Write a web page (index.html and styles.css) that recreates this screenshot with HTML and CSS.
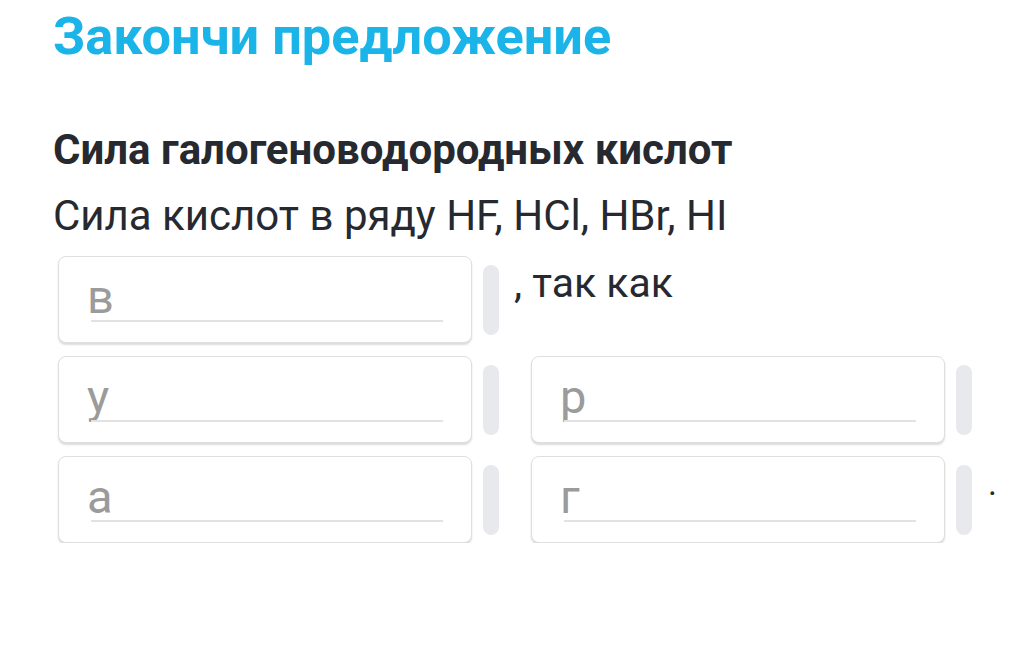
FILE: index.html
```html
<!DOCTYPE html>
<html lang="ru">
<head>
<meta charset="utf-8">
<link rel="stylesheet" href="styles.css">
</head>
<body>
<div class="page">
  <h1 class="title">Закончи предложение</h1>
  <h2 class="subtitle">Сила галогеноводородных кислот</h2>
  <p class="lead">Сила кислот в ряду HF, HCl, HBr, HI</p>
  <div class="blanks">
    <div class="row">
      <div class="item"><div class="box"><span class="ph">в</span><span class="line"></span></div><div class="handle"></div></div>
      <span class="txt">, так как</span>
    </div>
    <div class="row">
      <div class="item"><div class="box"><span class="ph">у</span><span class="line"></span></div><div class="handle"></div></div>
      <div class="item"><div class="box"><span class="ph">р</span><span class="line"></span></div><div class="handle"></div></div>
    </div>
    <div class="row">
      <div class="item"><div class="box"><span class="ph">а</span><span class="line"></span></div><div class="handle"></div></div>
      <div class="item"><div class="box"><span class="ph">г</span><span class="line"></span></div><div class="handle"></div></div>
      <span class="dot">.</span>
    </div>
  </div>
</div>
</body>
</html>
```

FILE: styles.css
```css
html, body {
  margin: 0;
  padding: 0;
  background: #ffffff;
}
.page {
  padding: 0 0 0 53px;
  font-family: Roboto, "Noto Sans", sans-serif;
  color: #24282e;
}
.title {
  margin: 0;
  padding-top: 6px;
  font-size: 52.3px;
  line-height: 60px;
  font-weight: 700;
  color: #1bb4e8;
}
.subtitle {
  margin: 60px 0 0 0;
  font-size: 42px;
  line-height: 48px;
  font-weight: 700;
  color: #262a30;
}
.lead {
  margin: 18px 0 0 0;
  font-size: 42px;
  line-height: 48px;
  font-weight: 400;
  color: #262a30;
}
.blanks {
  margin-top: 16px;
  display: flex;
  flex-direction: column;
  gap: 13px;
  padding-left: 5px;
}
.row {
  display: flex;
  align-items: flex-start;
  gap: 32px;
}
.item {
  display: flex;
  align-items: center;
  gap: 11px;
}
.box {
  width: 414px;
  height: 87px;
  box-sizing: border-box;
  border: 1.5px solid #dfdfdf;
  border-radius: 8px;
  box-shadow: 0 2px 2px rgba(0,0,0,0.14);
  background: #fff;
  display: flex;
  flex-direction: column;
  padding: 15px 0 0 28px;
}
.ph {
  display: block;
  font-size: 47px;
  line-height: 50px;
  color: #9b9b9b;
}
.line {
  display: block;
  margin: -2px 0 0 4px;
  width: 352px;
  height: 2px;
  background: #e2e2e2;
}
.handle {
  width: 16px;
  height: 70px;
  border-radius: 8px;
  background: #e8e9ed;
}
.txt {
  margin-left: -17px;
  font-size: 41px;
  line-height: 48px;
  padding-top: 3px;
  color: #262a30;
}
.dot {
  margin-left: -16px;
  font-size: 34px;
  line-height: 48px;
  padding-top: 3px;
  color: #262a30;
}
```
